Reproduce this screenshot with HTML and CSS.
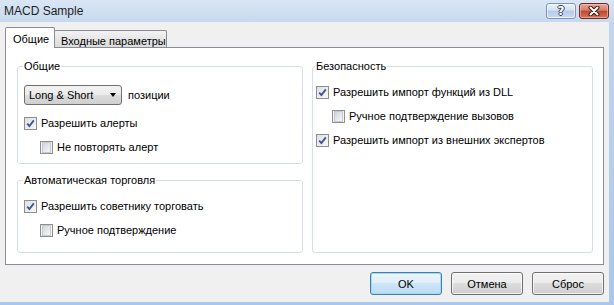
FILE: index.html
```html
<!DOCTYPE html>
<html lang="ru">
<head>
    <meta charset="UTF-8">
    <title>MACD Sample</title>
    <link rel="stylesheet" href="styles.css">
</head>
<body>
    <div class="window">
        <div class="titlebar">
            <span class="title">MACD Sample</span>
            <div class="caption-buttons">
                <div class="cap-btn help"><span>?</span></div>
                <div class="cap-btn close">
                    <svg width="12" height="10" viewBox="0 0 12 10">
                        <path d="M2.5 1.5 L9.5 8.5 M9.5 1.5 L2.5 8.5" stroke="#3b1512" stroke-width="4" stroke-linecap="round"/>
                        <path d="M2.5 1.5 L9.5 8.5 M9.5 1.5 L2.5 8.5" stroke="#fff" stroke-width="2" stroke-linecap="round"/>
                    </svg>
                </div>
            </div>
        </div>

        <div class="client">
            <div class="tabs">
                <div class="tab active">Общие</div>
                <div class="tab">Входные параметры</div>
            </div>

            <div class="panel">
                <div class="col">
                    <fieldset class="group g-common">
                        <legend>Общие</legend>
                        <div class="group-body">
                            <div class="combo-row">
                                <div class="combo">
                                    <span>Long &amp; Short</span>
                                    <span class="arrow"></span>
                                </div>
                                <span>позиции</span>
                            </div>
                            <label class="row">
                                <span class="check checked"><svg width="9" height="9" viewBox="0 0 9 9"><path d="M1.2 4.6 L3.4 7 L7.8 1.4" fill="none" stroke="#3d5395" stroke-width="1.8"/></svg></span>
                                Разрешить алерты
                            </label>
                            <label class="row sub">
                                <span class="check"></span>
                                Не повторять алерт
                            </label>
                        </div>
                    </fieldset>

                    <fieldset class="group g-trade">
                        <legend>Автоматическая торговля</legend>
                        <div class="group-body">
                            <label class="row">
                                <span class="check checked"><svg width="9" height="9" viewBox="0 0 9 9"><path d="M1.2 4.6 L3.4 7 L7.8 1.4" fill="none" stroke="#3d5395" stroke-width="1.8"/></svg></span>
                                Разрешить советнику торговать
                            </label>
                            <label class="row sub">
                                <span class="check"></span>
                                Ручное подтверждение
                            </label>
                        </div>
                    </fieldset>
                </div>

                <fieldset class="group g-safety">
                    <legend>Безопасность</legend>
                    <div class="group-body">
                        <label class="row">
                            <span class="check checked"><svg width="9" height="9" viewBox="0 0 9 9"><path d="M1.2 4.6 L3.4 7 L7.8 1.4" fill="none" stroke="#3d5395" stroke-width="1.8"/></svg></span>
                            Разрешить импорт функций из DLL
                        </label>
                        <label class="row sub">
                            <span class="check"></span>
                            Ручное подтверждение вызовов
                        </label>
                        <label class="row">
                            <span class="check checked"><svg width="9" height="9" viewBox="0 0 9 9"><path d="M1.2 4.6 L3.4 7 L7.8 1.4" fill="none" stroke="#3d5395" stroke-width="1.8"/></svg></span>
                            Разрешить импорт из внешних экспертов
                        </label>
                    </div>
                </fieldset>
            </div>

            <div class="footer">
                <button class="btn default">OK</button>
                <button class="btn">Отмена</button>
                <button class="btn">Сброс</button>
            </div>
        </div>
    </div>
</body>
</html>
```

FILE: styles.css
```css
* {
    margin: 0;
    padding: 0;
    box-sizing: border-box;
}

body {
    width: 614px;
    height: 305px;
    overflow: hidden;
    font-family: "Liberation Sans", Arial, sans-serif;
    font-size: 11px;
    color: #000;
}

.window {
    display: flex;
    flex-direction: column;
    height: 305px;
    background: linear-gradient(#c3d7ee, #a9c7ea);
}

/* title bar */
.titlebar {
    height: 22px;
    display: flex;
    align-items: flex-start;
    padding: 0 5px 0 4px;
    background: linear-gradient(#dae6f4, #c6d9ee);
}

.title {
    flex: 1;
    font-size: 12px;
    line-height: 22px;
    color: #1e1e1e;
}

.caption-buttons {
    display: flex;
    gap: 3px;
    padding-top: 3px;
}

.cap-btn {
    width: 30px;
    height: 16px;
    border-radius: 3px;
    display: flex;
    align-items: center;
    justify-content: center;
}

.cap-btn.help {
    border: 1px solid #7d95b6;
    background: linear-gradient(#eaf1f9, #d3e1f1 45%, #b5cbe6 50%, #c9dbf0);
    box-shadow: inset 0 0 0 1px rgba(255, 255, 255, 0.6);
}

.cap-btn.help span {
    font-family: "DejaVu Sans", sans-serif;
    font-weight: bold;
    font-size: 12px;
    line-height: 14px;
    color: #fff;
    text-shadow: 1px 0 #2d3f5f, -1px 0 #2d3f5f, 0 1px #2d3f5f, 0 -1px #2d3f5f;
}

.cap-btn.close {
    border: 1px solid #6b2a22;
    background: linear-gradient(#e7a797, #d37d6b 45%, #bf4630 50%, #d5735c);
    box-shadow: inset 0 0 0 1px rgba(255, 210, 200, 0.5);
}

/* client area */
.client {
    flex: 1;
    display: flex;
    flex-direction: column;
    margin: 0 5px 3px 0;
    padding: 5px 5px 7px 5px;
    background: #f0f0f0;
}

.tabs {
    display: flex;
    align-items: flex-end;
    height: 20px;
}

.tab {
    height: 17px;
    width: 113px;
    margin-left: -1px;
    padding: 3px 0 0 6px;
    line-height: 14px;
    white-space: nowrap;
    border: 1px solid #898c95;
    border-bottom: none;
    border-radius: 2px 2px 0 0;
    background: linear-gradient(#f3f3f3, #e6e6e6 50%, #dcdcdc);
}

.tab.active {
    position: relative;
    z-index: 1;
    width: 50px;
    height: 21px;
    margin-left: 0;
    margin-bottom: -1px;
    padding: 4px 0 0 7px;
    background: #fff;
}

.panel {
    height: 218px;
    display: grid;
    grid-template-columns: 286px 281px;
    column-gap: 9px;
    padding: 11px 10px 11px 11px;
    border: 1px solid #898c95;
    background: #fff;
}

.col {
    display: flex;
    flex-direction: column;
    gap: 9px;
}

.group {
    min-width: 0;
    border: 1px solid #d5dfe5;
    border-radius: 3px;
    padding: 11px 6px 8px;
}

.group legend {
    margin-left: -1px;
    padding: 0 1px;
    line-height: 14px;
}

.g-common {
    padding-top: 12px;
}

.g-trade {
    padding-bottom: 14px;
}

.g-safety {
    padding-left: 3px;
}

.group-body {
    display: flex;
    flex-direction: column;
    gap: 8px;
}

.combo-row {
    display: flex;
    align-items: center;
    gap: 6px;
    margin-bottom: 2px;
}

.combo {
    width: 98px;
    height: 20px;
    display: flex;
    align-items: center;
    justify-content: space-between;
    padding: 0 5px 0 4px;
    border: 1px solid #707070;
    border-radius: 3px;
    background: linear-gradient(#f2f2f2, #ebebeb 50%, #dddddd 50%, #cfcfcf);
}

.arrow {
    width: 0;
    height: 0;
    border-left: 3.5px solid transparent;
    border-right: 3.5px solid transparent;
    border-top: 4px solid #000;
}

.row {
    height: 16px;
    display: flex;
    align-items: center;
    gap: 4px;
}

.row.sub {
    padding-left: 16px;
}

.check {
    width: 13px;
    height: 13px;
    flex: none;
    display: flex;
    align-items: center;
    justify-content: center;
    border: 1px solid #8e8f8f;
    background: #f4f4f4;
    padding: 1px;
}

.check::before {
    content: "";
    display: block;
    width: 9px;
    height: 9px;
    border: 1px solid #c6c9ce;
    background: linear-gradient(135deg, #d2d5da, #f7f7f7);
}

.check.checked::before {
    display: none;
}

.check.checked {
    background: linear-gradient(135deg, #dde0e4, #f8f8f8);
}

/* buttons */
.footer {
    display: flex;
    justify-content: flex-end;
    gap: 9px;
    margin-top: 7px;
}

.btn {
    width: 72px;
    height: 23px;
    font-family: inherit;
    font-size: 11px;
    color: #000;
    border: 1px solid #707070;
    border-radius: 3px;
    background: linear-gradient(#f2f2f2, #ebebeb 50%, #dddddd 50%, #cfcfcf);
    box-shadow: inset 0 0 0 1px rgba(255, 255, 255, 0.7);
}

.btn.default {
    border-color: #3c7fb1;
    background: linear-gradient(#ecf5fc, #e0effa 50%, #cde6f7 50%, #bcdcf3);
    box-shadow: inset 0 0 0 1px #a7d8f7;
}
```
